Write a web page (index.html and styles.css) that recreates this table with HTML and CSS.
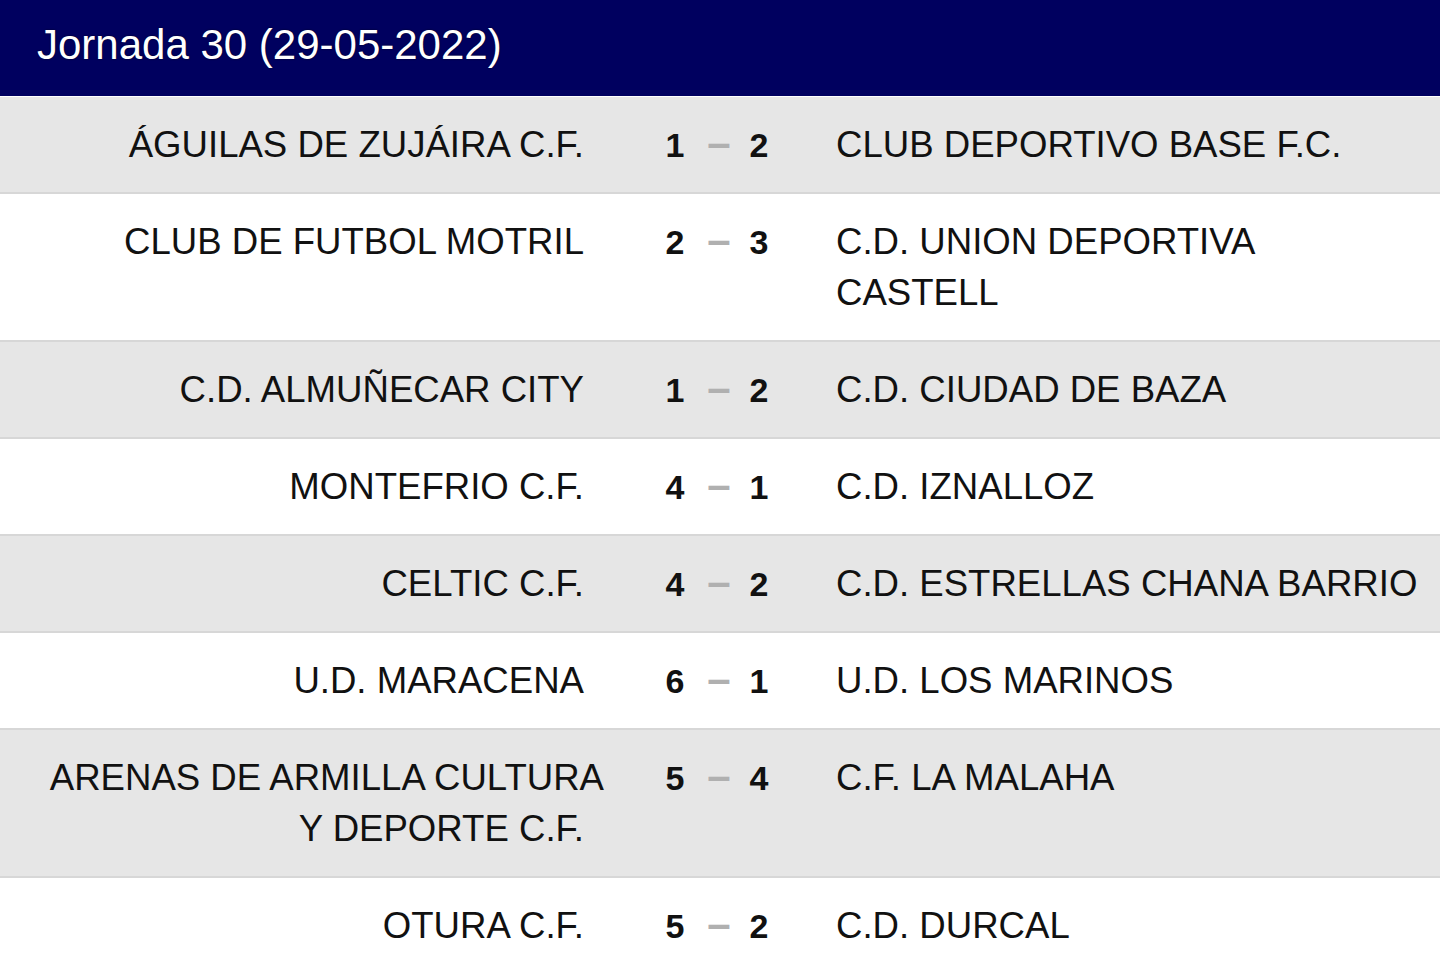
FILE: index.html
```html
<!DOCTYPE html>
<html lang="es">
<head>
<meta charset="utf-8">
<title>Jornada 30</title>
<link rel="stylesheet" href="styles.css">
</head>
<body>
<div class="round">
  <div class="round-header">Jornada 30 (29-05-2022)</div>
  <div class="matches">
    <div class="match alt">
      <div class="home">ÁGUILAS DE ZUJÁIRA C.F.</div>
      <div class="score"><span class="g">1</span><span class="sep">–</span><span class="g">2</span></div>
      <div class="away">CLUB DEPORTIVO BASE F.C.</div>
    </div>
    <div class="match">
      <div class="home">CLUB DE FUTBOL MOTRIL</div>
      <div class="score"><span class="g">2</span><span class="sep">–</span><span class="g">3</span></div>
      <div class="away">C.D. UNION DEPORTIVA CASTELL</div>
    </div>
    <div class="match alt">
      <div class="home">C.D. ALMUÑECAR CITY</div>
      <div class="score"><span class="g">1</span><span class="sep">–</span><span class="g">2</span></div>
      <div class="away">C.D. CIUDAD DE BAZA</div>
    </div>
    <div class="match">
      <div class="home">MONTEFRIO C.F.</div>
      <div class="score"><span class="g">4</span><span class="sep">–</span><span class="g">1</span></div>
      <div class="away">C.D. IZNALLOZ</div>
    </div>
    <div class="match alt">
      <div class="home">CELTIC C.F.</div>
      <div class="score"><span class="g">4</span><span class="sep">–</span><span class="g">2</span></div>
      <div class="away">C.D. ESTRELLAS CHANA BARRIO</div>
    </div>
    <div class="match">
      <div class="home">U.D. MARACENA</div>
      <div class="score"><span class="g">6</span><span class="sep">–</span><span class="g">1</span></div>
      <div class="away">U.D. LOS MARINOS</div>
    </div>
    <div class="match alt">
      <div class="home"><span class="overhang">ARENAS DE ARMILLA CULTURA</span><br>Y DEPORTE C.F.</div>
      <div class="score"><span class="g">5</span><span class="sep">–</span><span class="g">4</span></div>
      <div class="away">C.F. LA MALAHA</div>
    </div>
    <div class="match">
      <div class="home">OTURA C.F.</div>
      <div class="score"><span class="g">5</span><span class="sep">–</span><span class="g">2</span></div>
      <div class="away">C.D. DURCAL</div>
    </div>
  </div>
</div>
</body>
</html>
```

FILE: styles.css
```css
html, body {
  margin: 0;
  padding: 0;
  background: #ffffff;
}

body {
  font-family: "Liberation Sans", Arial, sans-serif;
  color: #111111;
}

.round-header {
  height: 96px;
  box-sizing: border-box;
  display: flex;
  align-items: center;
  padding: 0 0 6px 37px;
  background: #00005f;
  color: #ffffff;
  font-size: 42px;
  text-shadow: 0 0 2px #000022;
}

.matches {
  display: flex;
  flex-direction: column;
}

.match {
  display: grid;
  grid-template-columns: 584px 252px 1fr;
  padding: 22px 0;
  border-bottom: 2px solid #d7d7d7;
  background: #ffffff;
  font-size: 36.6px;
  line-height: 51px;
}

.match.alt {
  background: #e6e6e6;
}

.match:first-child {
  margin-top: 1px;
}

.home {
  text-align: right;
  padding-left: 20px;
}

.overhang {
  white-space: nowrap;
  margin-right: -20px;
}

.score {
  padding-left: 66px;
  white-space: nowrap;
}

.g,
.sep {
  display: inline-block;
  line-height: 30px;
  text-align: center;
}

.g {
  width: 50px;
  font-weight: bold;
  font-size: 34px;
}

.g + .sep + .g {
  width: 42px;
}

.sep {
  width: 38px;
  color: #b0b0b0;
  font-weight: bold;
  font-size: 42px;
}

.away {
  padding-right: 19px;
}
```
